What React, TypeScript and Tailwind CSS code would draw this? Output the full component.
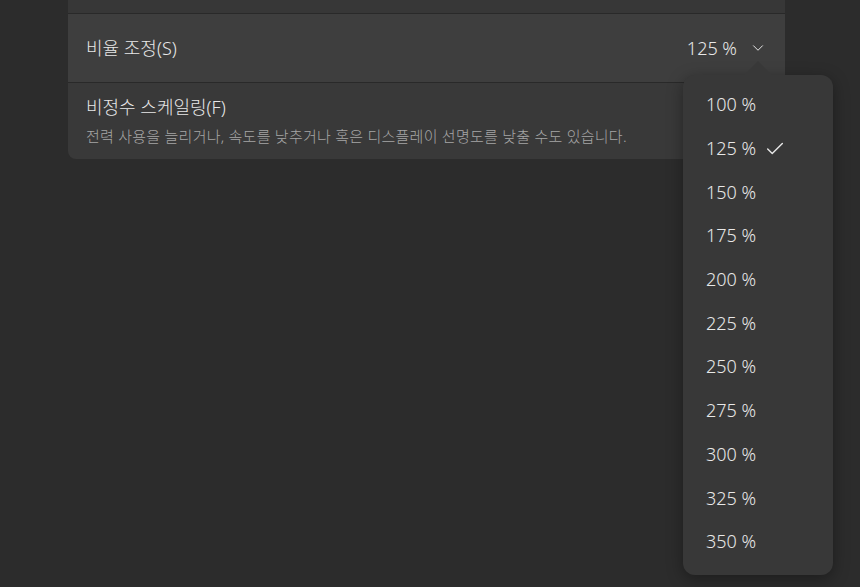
import { Check, ChevronDown } from "lucide-react"

const scales = ["100 %", "125 %", "150 %", "175 %", "200 %", "225 %", "250 %", "275 %", "300 %", "325 %", "350 %"]

export default function App() {
    const selected = "125 %"

    return (
        <div
            className="relative h-[587px] w-full overflow-hidden bg-[#2c2c2c] text-[#e8e8e8]"
            style={{ fontFamily: '"Noto Sans", "Noto Sans CJK KR", sans-serif' }}
        >
            {/* settings card */}
            <div className="ml-[68px] w-[717px] overflow-hidden rounded-b-lg bg-[#393939]">
                <div className="h-[13px] bg-[#373737]" />
                <div className="flex h-[69px] items-center justify-between border-t border-[#292929] bg-[#3e3e3e] pl-[18px] pr-[18px]">
                    <span className="text-[18px] font-light">비율 조정(S)</span>
                    <div className="flex items-center gap-[12px]">
                        <span className="text-[18px] font-light">125 %</span>
                        <ChevronDown className="h-[18px] w-[18px]" strokeWidth={1.3} />
                    </div>
                </div>
                <div className="flex h-[77px] flex-col justify-center border-t border-[#292929] pb-[2px] pl-[18px]">
                    <span className="text-[18px] font-light leading-[24px]">비정수 스케일링(F)</span>
                    <span className="mt-[8px] text-[15px] font-light leading-[18px] tracking-[0.25px] text-[#a6a6a6]">
                        전력 사용을 늘리거나, 속도를 낮추거나 혹은 디스플레이 선명도를 낮출 수도 있습니다.
                    </span>
                </div>
            </div>

            {/* dropdown flyout */}
            <div className="absolute left-[683px] top-[60px] w-[150px]">
                <svg className="absolute left-[59px] top-0" width="32" height="16" viewBox="0 0 32 16">
                    <path d="M1 16 L16 1 L31 16 Z" fill="#383838" />
                </svg>
                <div className="mt-[15px] rounded-xl bg-[#383838] pb-[11px] pt-2 shadow-[0_4px_16px_rgba(0,0,0,0.35)]">
                    {scales.map((s) => (
                        <div key={s} className="flex h-[43.7px] items-center gap-[8px] pl-[23px] text-[18px] font-light">
                            <span>{s}</span>
                            {s === selected && <Check className="h-[22px] w-[22px]" strokeWidth={1.5} />}
                        </div>
                    ))}
                </div>
            </div>
        </div>
    )
}
